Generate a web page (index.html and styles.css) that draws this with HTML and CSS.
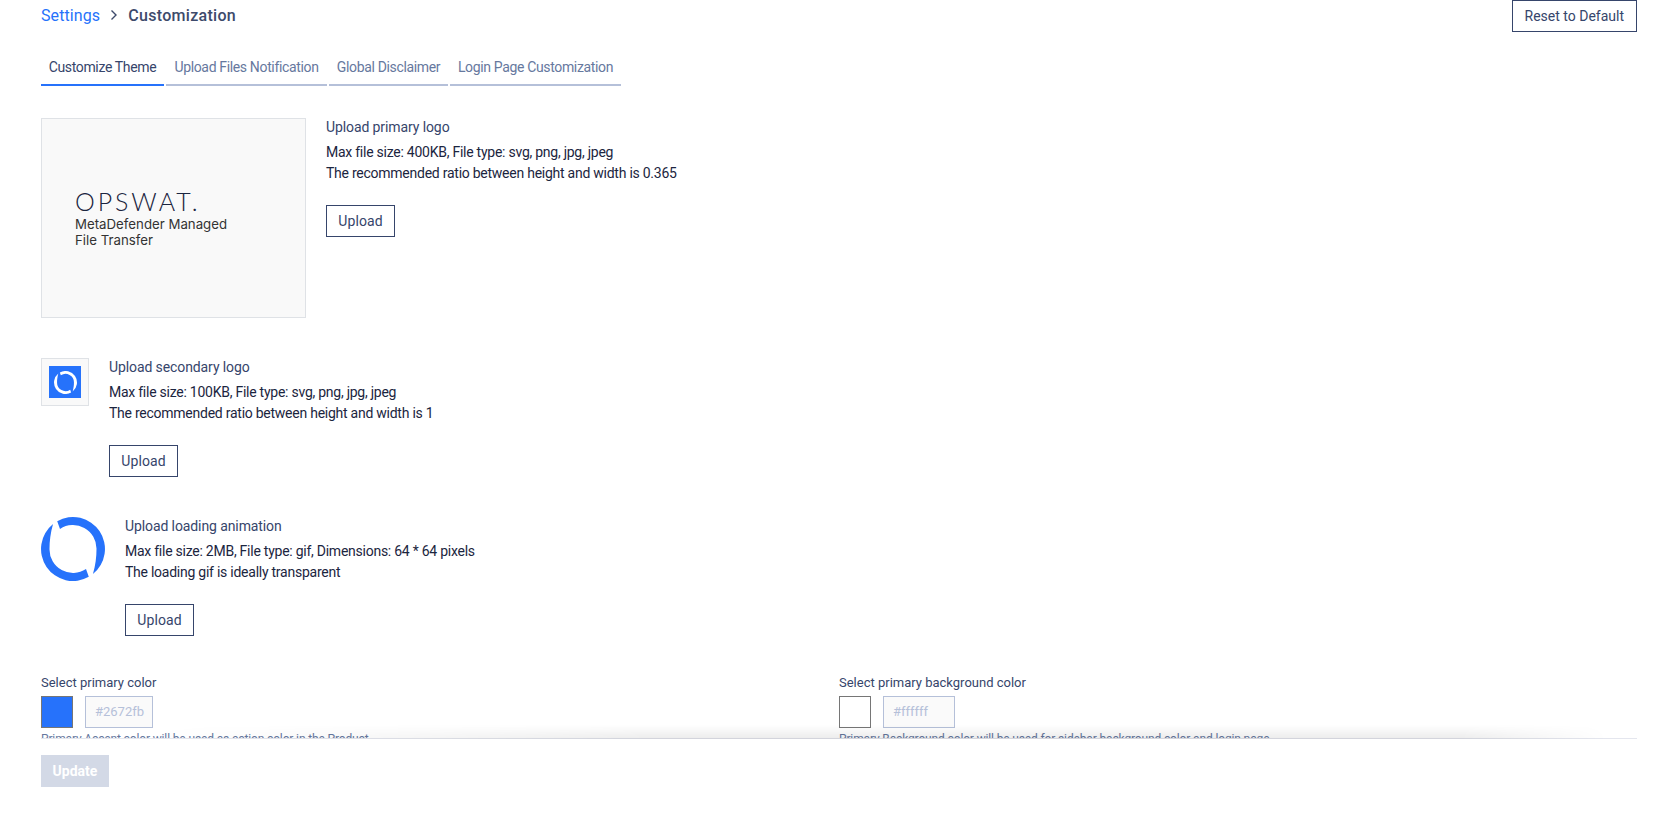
FILE: index.html
```html
<!DOCTYPE html>
<html lang="en">
<head>
    <meta charset="UTF-8">
    <meta name="viewport" content="width=device-width, initial-scale=1.0">
    <title>Customization</title>
    <link rel="stylesheet" href="styles.css">
</head>
<body>

    <div class="scroll">
        <div class="header">
            <div class="crumbs">
                <a class="crumb-link">Settings</a>
                <svg class="crumb-sep" width="8" height="12" viewBox="0 0 8 12"><path d="M1.5 1.5 6 6l-4.500 4.500" fill="none" stroke="#3d4a6b" stroke-width="1.400"/></svg>
                <span class="crumb-current">Customization</span>
            </div>
            <button class="btn">Reset to Default</button>
        </div>

        <div class="tabs">
            <div class="tab active">Customize Theme</div>
            <div class="tab tab-files">Upload Files Notification</div>
            <div class="tab tab-global">Global Disclaimer</div>
            <div class="tab tab-login">Login Page Customization</div>
        </div>

        <div class="row row-primary">
            <div class="logo-box">
                <div class="opswat">OPSWAT.</div>
                <div class="logo-sub">MetaDefender Managed<br>File Transfer</div>
            </div>
            <div class="info">
                <div class="info-title">Upload primary logo</div>
                <div class="info-line">Max file size: 400KB, File type: svg, png, jpg, jpeg</div>
                <div class="info-line">The recommended ratio between height and width is 0.365</div>
                <button class="btn btn-upload">Upload</button>
            </div>
        </div>

        <div class="row row-secondary">
            <div class="icon-box">
                <div class="icon-blue">
                    <svg width="23" height="23" viewBox="0 0 64 64" fill="#fff">
                        <path d="M16.220 4.160A32 32 0 0 1 51.950 57.010C54.500 48 55.500 40 55.500 32A23.500 23.500 0 0 0 19 12Z"/>
                        <path d="M47.780 59.840A32 32 0 0 1 12.050 6.990C9.500 16 8.500 24 8.500 32A23.500 23.500 0 0 0 45 52Z"/>
                    </svg>
                </div>
            </div>
            <div class="info">
                <div class="info-title">Upload secondary logo</div>
                <div class="info-line">Max file size: 100KB, File type: svg, png, jpg, jpeg</div>
                <div class="info-line">The recommended ratio between height and width is 1</div>
                <button class="btn btn-upload">Upload</button>
            </div>
        </div>

        <div class="row row-loading">
            <svg class="loader" width="64" height="64" viewBox="0 0 64 64" fill="#2672fb">
                <path d="M16.220 4.160A32 32 0 0 1 51.950 57.010C54.500 48 55.500 40 55.500 32A23.500 23.500 0 0 0 19 12Z"/>
                <path d="M47.780 59.840A32 32 0 0 1 12.050 6.990C9.500 16 8.500 24 8.500 32A23.500 23.500 0 0 0 45 52Z"/>
            </svg>
            <div class="info">
                <div class="info-title">Upload loading animation</div>
                <div class="info-line">Max file size: 2MB, File type: gif, Dimensions: 64 * 64 pixels</div>
                <div class="info-line">The loading gif is ideally transparent</div>
                <button class="btn btn-upload">Upload</button>
            </div>
        </div>

        <div class="colors">
            <div class="color-col">
                <div class="color-label">Select primary color</div>
                <div class="color-inputs">
                    <div class="swatch swatch-blue"></div>
                    <div class="hex hex-blue">#2672fb</div>
                </div>
                <div class="color-help">Primary Accent color will be used as action color in the Product</div>
            </div>
            <div class="color-col">
                <div class="color-label">Select primary background color</div>
                <div class="color-inputs">
                    <div class="swatch"></div>
                    <div class="hex hex-white">#ffffff</div>
                </div>
                <div class="color-help">Primary Background color will be used for sidebar background color and login page</div>
            </div>
        </div>
    </div>

    <div class="footer">
        <button class="btn-update" disabled>Update</button>
    </div>

</body>
</html>
```

FILE: styles.css
```css
html, body { margin: 0; height: 100%; overflow: hidden; }
body { font-family: Roboto, sans-serif; font-size: 14px; color: #1b2540; background: #fff; }
button { font-family: inherit; }

.scroll { height: 738px; overflow: hidden; padding: 0 41px; box-sizing: border-box; }
.header { display: flex; justify-content: space-between; align-items: flex-start; }
.crumbs { display: flex; align-items: center; gap: 10px; height: 30px; font-size: 16px; }
.crumb-link { color: #2672fb; letter-spacing: 0.1px; }
.crumb-current { color: #3d4a6b; font-weight: 500; letter-spacing: 0.3px; }
.btn { height: 32px; padding: 0 12px; background: #fff; border: 1px solid #36456b; color: #36456b; font-size: 14px; }

.tabs { display: flex; gap: 2px; margin-top: 23px; }
.tab { height: 31px; line-height: 24px; box-sizing: border-box; text-align: center; white-space: nowrap; border-bottom: 2px solid #b5c0d9; color: #66789e; letter-spacing: -0.35px; }
.tab.active { width: 123px; border-bottom-color: #2672fb; color: #36456b; }
.tab-files { width: 161px; }
.tab-global { width: 119px; }
.tab-login { width: 171px; }

.row { display: flex; align-items: flex-start; }
.row-primary { margin-top: 32px; gap: 20px; }
.row-secondary { margin-top: 40px; gap: 20px; }
.row-loading { margin-top: 40px; gap: 20px; }

.logo-box { width: 265px; height: 200px; box-sizing: border-box; border: 1px solid #dfe2e6; background: #f9f9f9; padding: 68px 0 0 33px; }
.opswat { font-family: Lato, sans-serif; font-weight: 300; font-size: 25px; line-height: 28px; letter-spacing: 2.900px; color: #1b2540; }
.logo-sub { font-family: Inter, sans-serif; font-size: 13.250px; line-height: 16px; color: #333; margin-top: 1px; }

.icon-box { width: 48px; height: 48px; box-sizing: border-box; border: 1px solid #dfe2e6; background: #f9f9f9; display: flex; align-items: center; justify-content: center; }
.icon-blue { width: 32px; height: 32px; background: #2672fb; display: flex; align-items: center; justify-content: center; }
.loader { flex: none; }

.info-title { color: #36456b; height: 18px; line-height: 18px; margin-bottom: 6px; letter-spacing: -0.1px; }
.info-line { height: 21px; line-height: 21px; color: #1b2540; letter-spacing: -0.25px; }
.btn-upload { display: block; margin-top: 21px; padding: 0; width: 69px; letter-spacing: 0.1px; }

.colors { display: flex; margin-top: 38px; }
.color-col { width: 798px; }
.color-label { color: #36456b; font-size: 13px; line-height: 18px; }
.color-inputs { display: flex; gap: 12px; margin-top: 4px; }
.swatch { width: 32px; height: 32px; box-sizing: border-box; border: 1px solid #767676; background: #fff; }
.swatch-blue { background: #2672fb; }
.hex { height: 32px; line-height: 30px; box-sizing: border-box; border: 1px solid #b5c0d9; background: #fafafa; color: #b5c0d9; padding: 0 9px; font-size: 13px; }
.hex-blue { width: 68px; }
.hex-white { width: 72px; }
.color-help { font-size: 12px; line-height: 18px; margin-top: 2px; color: #66789e; letter-spacing: -0.14px; }

.footer { position: relative; margin: 0 41px; padding-top: 16px; border-top: 1px solid #e4e6ee; background: #fff; }
.footer::before { content: ""; position: absolute; left: 100px; right: 30px; bottom: 100%; height: 14px; background: linear-gradient(to top, rgba(0, 0, 0, 0.08), transparent); mask-image: linear-gradient(to right, transparent, #000 35%, #000 90%, transparent); }
.btn-update { display: block; width: 68px; height: 32px; border: none; background: #d3d9e6; color: #fff; font-size: 14px; font-weight: 700; }
```
